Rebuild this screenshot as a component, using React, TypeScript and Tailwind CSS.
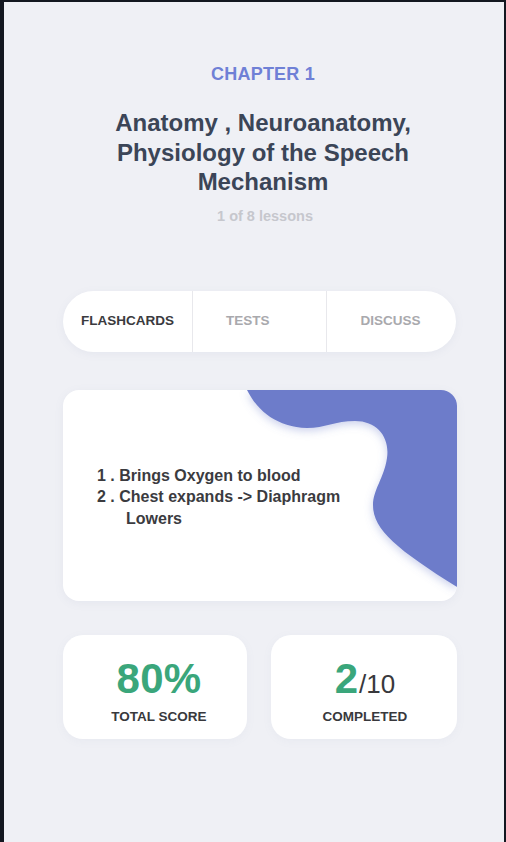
import React from "react";

const font = { fontFamily: '"Liberation Sans", Arial, sans-serif' };

export default function App() {
  return (
    <div className="min-h-[842px] w-[506px] bg-[#131720] pl-[4px] pr-[2px] pt-[2px]" style={font}>
      <div className="min-h-[840px] bg-[#eff0f5] flex flex-col items-center pl-[18px]">
        <div className="mt-[62px] text-[18px] font-bold text-[#6f80d6] leading-[20px] tracking-[0.2px]">CHAPTER 1</div>
        <div className="mt-[24px] text-center text-[24px] leading-[29.5px] font-semibold text-[#3b4557]">
          Anatomy , Neuroanatomy,
          <br />
          Physiology of the Speech
          <br />
          Mechanism
        </div>
        <div className="mt-[11px] ml-[4px] text-[14.5px] font-bold text-[#c6c7cd] leading-[16px]">1 of 8 lessons</div>

        <div className="mt-[67px] ml-[-7px] flex h-[61px] w-[393px] items-stretch rounded-full bg-white shadow-[0_2px_8px_rgba(120,130,170,0.08)]">
          <div className="flex w-[129px] items-center justify-center text-[13.5px] font-bold text-[#3a3a3e]">FLASHCARDS</div>
          <div className="flex w-[134px] items-center border-l border-[#e8e8ec] pl-[33px] text-[13.5px] font-bold text-[#a9a9ad]">TESTS</div>
          <div className="flex flex-1 items-center justify-center border-l border-[#e8e8ec] pr-[2px] text-[13.5px] font-bold text-[#a9a9ad]">DISCUSS</div>
        </div>

        <div className="relative mt-[38px] ml-[-6px] h-[211px] w-[394px] overflow-hidden rounded-[16px] bg-white shadow-[0_2px_10px_rgba(120,130,170,0.08)]">
          <svg className="absolute left-0 top-0" width="394" height="211" viewBox="0 0 394 211">
            <defs>
              <filter id="sh" x="-20%" y="-20%" width="140%" height="140%">
                <feDropShadow dx="0" dy="3" stdDeviation="4" floodColor="#6c7bcb" floodOpacity="0.35" />
              </filter>
            </defs>
            <path
              filter="url(#sh)"
              fill="#6d7cca"
              d="M184 0 C195 22 215 37 244 38 C262 38 272 31 292 31 C315 31 327 48 324 68 C321 88 310 100 310 115 C310 140 335 160 394 197 L394 0 Z"
            />
          </svg>
          <div className="relative pl-[34px] pt-[75px] text-[16px] leading-[21.5px] font-semibold text-[#3b3b3f]">
            <div>1 . Brings Oxygen to blood</div>
            <div>2 . Chest expands -&gt; Diaphragm</div>
            <div className="pl-[29px]">Lowers</div>
          </div>
        </div>

        <div className="mt-[34px] ml-[-6px] flex w-[394px] gap-[24px]">
          <div className="flex h-[104px] w-[184px] flex-col items-center rounded-[20px] bg-white pl-[8px] pt-[22px] shadow-[0_2px_10px_rgba(120,130,170,0.06)]">
            <div className="h-[44px] text-[42px] leading-[44px] tracking-[0.3px] font-semibold text-[#3aa67b]">80%</div>
            <div className="mt-[8px] text-[13.5px] leading-[16px] font-bold text-[#38383c]">TOTAL SCORE</div>
          </div>
          <div className="flex h-[104px] flex-1 flex-col items-center rounded-[20px] bg-white pl-[2px] pt-[22px] shadow-[0_2px_10px_rgba(120,130,170,0.06)]">
            <div className="flex h-[44px] items-baseline leading-[44px]">
              <span className="text-[42px] font-semibold text-[#3aa67b]">2</span>
              <span className="ml-[1px] text-[26px] text-[#38383c]">/10</span>
            </div>
            <div className="mt-[8px] text-[13.5px] leading-[16px] font-bold text-[#38383c]">COMPLETED</div>
          </div>
        </div>
      </div>
    </div>
  );
}
